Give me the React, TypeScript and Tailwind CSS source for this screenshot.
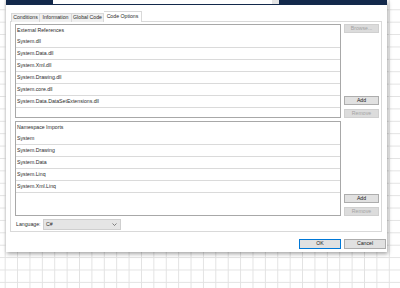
import React from "react";

const refs = [
  "System.dll",
  "System.Data.dll",
  "System.Xml.dll",
  "System.Drawing.dll",
  "System.core.dll",
  "System.Data.DataSetExtensions.dll",
];
const ns = ["System", "System.Drawing", "System.Data", "System.Linq", "System.Xml.Linq"];

function Btn({ label, disabled, primary, size }: { label: string; disabled?: boolean; primary?: boolean; size: string }) {
  return (
    <div
      className={
        "flex items-center justify-center border leading-none " +
        size +
        " " +
        (disabled
          ? "bg-[#dcdcdc] border-[#d0d0d0] text-[#a3a3a3]"
          : primary
          ? "bg-[#e1e1e1] border-[#0078d7] text-[#222]"
          : "bg-[#e1e1e1] border-[#adadad] text-[#222]")
      }
    >
      {label}
    </div>
  );
}

function List({ title, items, h }: { title: string; items: string[]; h: string }) {
  return (
    <div className={"w-[326px] border border-[#a8a8a8] bg-white flex flex-col " + h}>
      <div className="h-[11px] pl-[1px] flex items-center leading-none">{title}</div>
      {items.map((t) => (
        <div key={t} className="h-[12px] pl-[1px] flex items-center leading-none border-b border-[#dadada] shrink-0">
          {t}
        </div>
      ))}
    </div>
  );
}

export default function App() {
  return (
    <div className="w-[400px] h-[288px] overflow-hidden bg-white bg-[linear-gradient(to_right,#e2e2e2_1px,transparent_1px),linear-gradient(to_bottom,#e2e2e2_1px,transparent_1px)] bg-[size:12.4px_12.4px] bg-[position:4.7px_9.3px] font-['Liberation_Sans',Arial,sans-serif] text-[5.2px] text-[#2a2a2a]">
      <div className="ml-[6px] w-[381px] h-[252px] bg-white shadow-[1px_2px_4px_rgba(0,0,0,0.35)] flex flex-col">
        <div className="h-[5px] bg-[#13294b] flex shrink-0">
          <div className="ml-[47px] w-[226px] h-[4px] bg-white flex justify-end">
            <div className="w-[7px] h-full bg-[#e4e4e4]" />
          </div>
        </div>
        <div className="pl-[4px] pr-[5px] pt-[7px] flex flex-col">
          <div className="h-[10px] flex items-end pl-[1px] relative z-10 -mb-px">
            <div className="w-[29px] h-[9px] border border-[#d9d9d9] border-b-0 bg-[#f0f0f0] flex items-center justify-center leading-none">Conditions</div>
            <div className="w-[32px] h-[9px] border border-[#d9d9d9] border-b-0 border-l-0 bg-[#f0f0f0] flex items-center justify-center leading-none">Information</div>
            <div className="w-[32px] h-[9px] border border-[#d9d9d9] border-b-0 border-l-0 bg-[#f0f0f0] flex items-center justify-center leading-none">Global Code</div>
            <div className="w-[38px] h-[11px] border border-[#d9d9d9] border-b-0 border-l-0 bg-white flex items-center justify-center leading-none">Code Options</div>
          </div>
          <div className="h-[211px] border border-[#d9d9d9] bg-white pl-[4px] pr-[2px] pt-[2px] pb-[1px] flex flex-col gap-[3px]">
            <div className="flex gap-[3px] h-[94px]">
              <List title="External References" items={refs} h="h-[94px]" />
              <div className="flex flex-col justify-between w-[35px]">
                <Btn label="Browse..." disabled size="w-[35px] h-[9px]" />
                <div className="flex flex-col gap-[4px]">
                  <Btn label="Add" size="w-[35px] h-[9px]" />
                  <Btn label="Remove" disabled size="w-[35px] h-[9px]" />
                </div>
              </div>
            </div>
            <div className="flex gap-[3px] h-[95px]">
              <List title="Namespace Imports" items={ns} h="h-[95px]" />
              <div className="flex flex-col justify-end w-[35px]">
                <div className="flex flex-col gap-[4px]">
                  <Btn label="Add" size="w-[35px] h-[9px]" />
                  <Btn label="Remove" disabled size="w-[35px] h-[9px]" />
                </div>
              </div>
            </div>
            <div className="h-[11px] flex items-center">
              <span className="w-[28px] pl-[1px] leading-none">Language:</span>
              <div className="w-[78px] h-[11px] bg-[#e5e5e5] border border-[#cfcfcf] flex items-center justify-between pl-[2px] pr-[3px]">
                <span className="leading-none">C#</span>
                <svg width="5" height="3" viewBox="0 0 5 3" fill="none">
                  <path d="M0.5 0.5 L2.5 2.5 L4.5 0.5" stroke="#555" strokeWidth="0.7" />
                </svg>
              </div>
            </div>
          </div>
        </div>
        <div className="flex justify-end gap-[3px] pr-[1px] pt-[7px]">
          <Btn label="OK" primary size="w-[42px] h-[10px]" />
          <Btn label="Cancel" size="w-[42px] h-[10px]" />
        </div>
      </div>
    </div>
  );
}
